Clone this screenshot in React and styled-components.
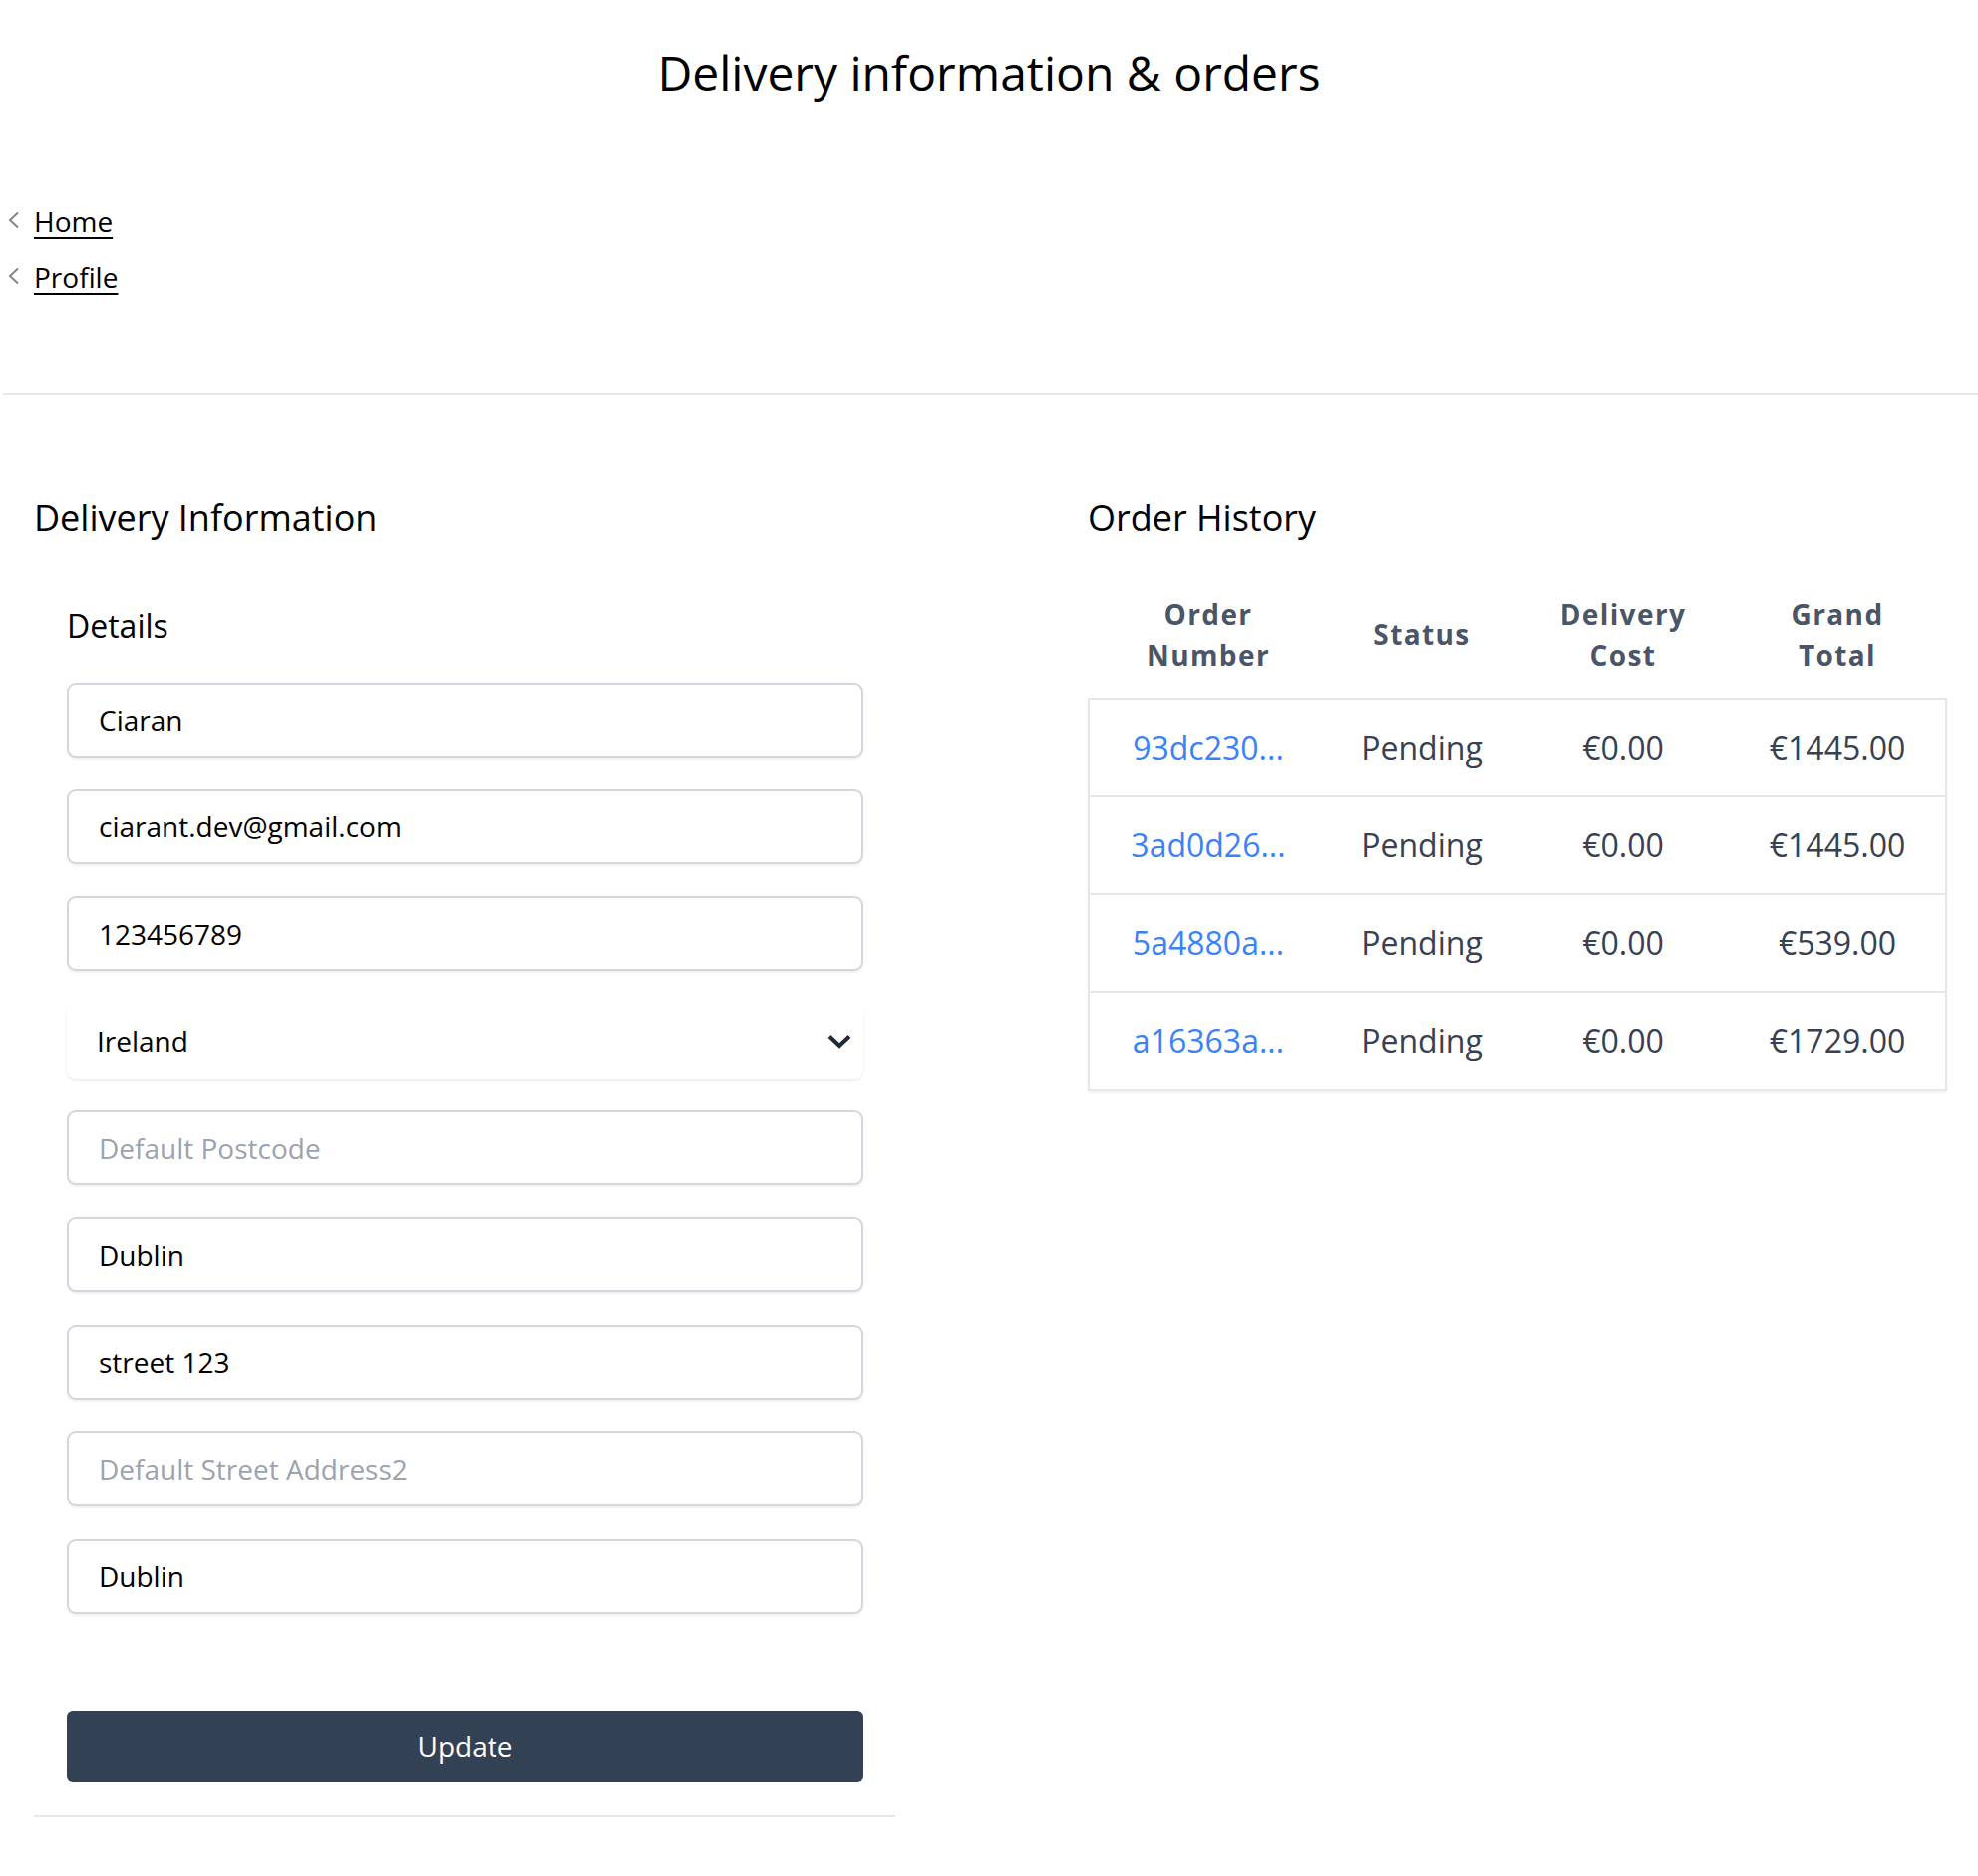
import React from 'react'
import styled, { createGlobalStyle } from 'styled-components'

const GlobalStyle = createGlobalStyle`
    * {
        box-sizing: border-box;
    }
    body {
        margin: 0;
        background: #ffffff;
        font-family: "Open Sans", "Liberation Sans", sans-serif;
        color: #000000;
    }
`

const Page = styled.div`
    width: 100%;
    min-height: 1882px;
    background: #ffffff;
`
const Title = styled.h1`
    margin: 0;
    padding-top: 44px;
    font-size: 48px;
    line-height: 58px;
    font-weight: 400;
    text-align: center;
`
const Breadcrumbs = styled.nav`
    display: flex;
    flex-direction: column;
    margin-top: 92px;
    padding-left: 7px;
`
const Crumb = styled.div`
    display: flex;
    align-items: center;
    height: 56px;
`
const CrumbLink = styled.a`
    font-size: 28px;
    line-height: 56px;
    color: #000000;
    text-decoration: underline;
    text-underline-offset: 5px;
    text-decoration-thickness: 2px;
    cursor: pointer;
`
const Back = styled.svg`
    width: 13px;
    height: 18px;
    margin-right: 14px;
    margin-top: -2px;
`
const Divider = styled.hr`
    border: none;
    height: 2px;
    background: #e5e7eb;
    margin: 88px 0 0 3px;
`
const Columns = styled.main`
    display: grid;
    grid-template-columns: 864px 862px;
    justify-content: space-between;
    padding: 101.5px 31px 0 34px;
`
const Panel = styled.section`
    display: flex;
    flex-direction: column;
`
const SectionTitle = styled.h2`
    margin: 0;
    font-size: 36px;
    line-height: 43px;
    font-weight: 400;
`
const Form = styled.form`
    display: flex;
    flex-direction: column;
    padding: 0 32px 0 33px;
`
const SubTitle = styled.h3`
    margin: 68px 0 0;
    font-size: 32px;
    line-height: 38px;
    font-weight: 400;
`
const Fields = styled.div`
    display: flex;
    flex-direction: column;
    gap: 32.4px;
    margin-top: 38px;
`
const TextInput = styled.input`
    width: 100%;
    height: 75px;
    padding: 0 30px;
    border: 2px solid #d3d7dd;
    border-radius: 9px;
    box-shadow: 0 2px 2px rgba(0, 0, 0, 0.06);
    font-family: inherit;
    font-size: 28px;
    color: #000000;
    background: #ffffff;
    outline: none;

    &::placeholder {
        color: #9ca3af;
    }
`
const SelectWrap = styled.div`
    position: relative;
    height: 75px;
`
const Select = styled.select`
    width: 100%;
    height: 100%;
    padding: 0 60px 0 28px;
    border: 2px solid transparent;
    border-radius: 9px;
    box-shadow: 0 2px 3px rgba(0, 0, 0, 0.07);
    appearance: none;
    background: #ffffff;
    font-family: inherit;
    font-size: 28px;
    color: #000000;
    outline: none;
`
const Caret = styled.svg`
    position: absolute;
    right: 12px;
    top: 30px;
    width: 24px;
    height: 15px;
    pointer-events: none;
`
const UpdateButton = styled.button`
    margin-top: 97px;
    height: 72px;
    width: 100%;
    border: none;
    border-radius: 6px;
    background: #334155;
    color: #ffffff;
    font-family: inherit;
    font-size: 28px;
    cursor: pointer;
`
const BottomRule = styled.div`
    margin-top: 33px;
    height: 2px;
    background: #e5e7eb;
`
const cols = '238px 190px 214px 1fr'

const HeaderRow = styled.div`
    display: grid;
    grid-template-columns: ${cols};
    align-items: center;
    margin-top: 33px;
    padding: 22px 2px;
`
const HeadCell = styled.div`
    text-align: center;
    font-size: 28px;
    line-height: 41px;
    font-weight: 700;
    letter-spacing: 1.4px;
    color: #4a5568;
`
const TableBody = styled.div`
    border: 2px solid #e5e7eb;
    box-shadow: 0 2px 3px rgba(0, 0, 0, 0.06);
`
const Row = styled.div`
    display: grid;
    grid-template-columns: ${cols};
    align-items: center;
    height: 98px;
    border-bottom: 2px solid #e5e7eb;

    &:last-child {
        height: 96px;
        border-bottom: none;
    }
`
const Cell = styled.div`
    text-align: center;
    font-size: 32px;
    color: ${props => props.$link ? '#3b82f6' : '#374151'};
    cursor: ${props => props.$link ? 'pointer' : 'default'};
`

const orders = [
    { id: '93dc230...', status: 'Pending', delivery: '€0.00', total: '€1445.00' },
    { id: '3ad0d26...', status: 'Pending', delivery: '€0.00', total: '€1445.00' },
    { id: '5a4880a...', status: 'Pending', delivery: '€0.00', total: '€539.00' },
    { id: 'a16363a...', status: 'Pending', delivery: '€0.00', total: '€1729.00' },
]

const BackIcon = () => (
    <Back viewBox="0 0 13 18">
        <path d="M11 1.5 L3 9 L11 16.5" fill="none" stroke="#858585" strokeWidth="2" />
    </Back>
)

const App = () => {
  return (
    <Page>
        <GlobalStyle />
        <Title>Delivery information &amp; orders</Title>
        <Breadcrumbs>
            <Crumb>
                <BackIcon />
                <CrumbLink>Home</CrumbLink>
            </Crumb>
            <Crumb>
                <BackIcon />
                <CrumbLink>Profile</CrumbLink>
            </Crumb>
        </Breadcrumbs>
        <Divider />
        <Columns>
            <Panel>
                <SectionTitle>Delivery Information</SectionTitle>
                <Form onSubmit={e => e.preventDefault()}>
                    <SubTitle>Details</SubTitle>
                    <Fields>
                        <TextInput defaultValue="Ciaran" />
                        <TextInput defaultValue="ciarant.dev@gmail.com" />
                        <TextInput defaultValue="123456789" />
                        <SelectWrap>
                            <Select defaultValue="IE">
                                <option value="IE">Ireland</option>
                            </Select>
                            <Caret viewBox="0 0 24 15">
                                <path d="M2 2.5 L12 12 L22 2.5" fill="none" stroke="#1f2a33" strokeWidth="4" />
                            </Caret>
                        </SelectWrap>
                        <TextInput placeholder="Default Postcode" />
                        <TextInput defaultValue="Dublin" />
                        <TextInput defaultValue="street 123" />
                        <TextInput placeholder="Default Street Address2" />
                        <TextInput defaultValue="Dublin" />
                    </Fields>
                    <UpdateButton type="submit">Update</UpdateButton>
                </Form>
                <BottomRule />
            </Panel>
            <Panel>
                <SectionTitle>Order History</SectionTitle>
                <HeaderRow>
                    <HeadCell>Order<br />Number</HeadCell>
                    <HeadCell>Status</HeadCell>
                    <HeadCell>Delivery<br />Cost</HeadCell>
                    <HeadCell>Grand<br />Total</HeadCell>
                </HeaderRow>
                <TableBody>
                    {orders.map(order => (
                        <Row key={order.id}>
                            <Cell $link>{order.id}</Cell>
                            <Cell>{order.status}</Cell>
                            <Cell>{order.delivery}</Cell>
                            <Cell>{order.total}</Cell>
                        </Row>
                    ))}
                </TableBody>
            </Panel>
        </Columns>
    </Page>
  )
}

export default App
